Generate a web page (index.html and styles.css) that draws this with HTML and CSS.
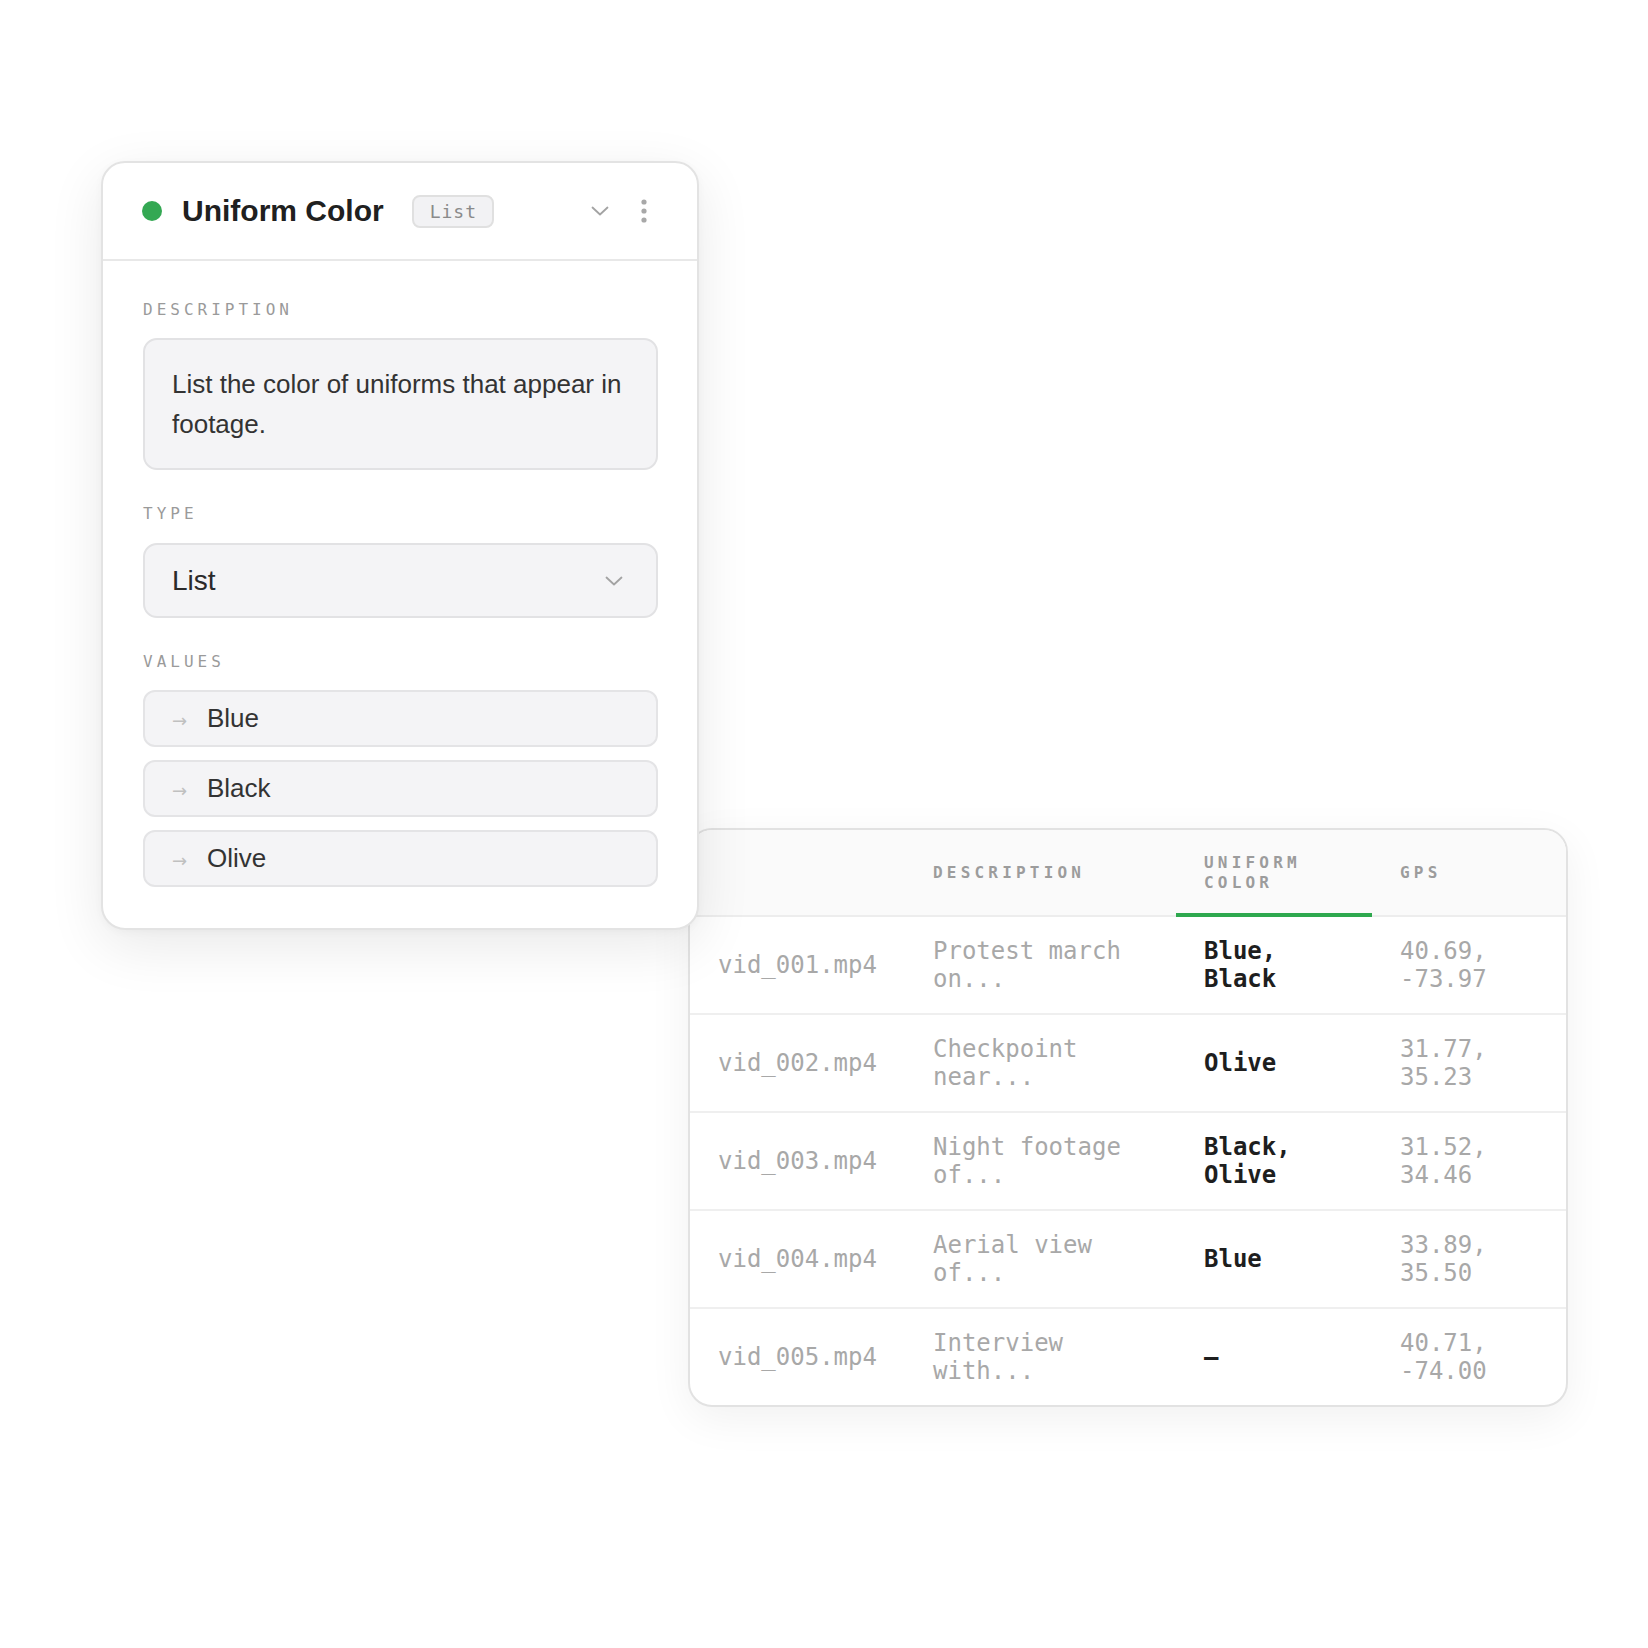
FILE: index.html
```html
<!DOCTYPE html>
<html lang="en">
<head>
<meta charset="utf-8">
<title>Uniform Color</title>
<link rel="stylesheet" href="styles.css">
</head>
<body>
<main class="stage">
  <section class="field-card">
    <header class="field-head">
      <span class="status-dot"></span>
      <h1 class="field-title">Uniform Color</h1>
      <span class="type-badge">List</span>
      <span class="head-actions">
        <svg class="icon-chevron" width="18" height="10" viewBox="0 0 18 10" aria-hidden="true"><path d="M1.5 1.5l7.5 7 7.5-7" fill="none" stroke="#a3a3a3" stroke-width="1.8" stroke-linecap="round" stroke-linejoin="round"/></svg>
        <svg class="icon-kebab" width="8" height="24" viewBox="0 0 8 24" aria-hidden="true"><circle cx="4" cy="3" r="2.6" fill="#a8a8a8"/><circle cx="4" cy="12" r="2.6" fill="#a8a8a8"/><circle cx="4" cy="21" r="2.6" fill="#a8a8a8"/></svg>
      </span>
    </header>
    <div class="field-body">
      <div class="field-label">DESCRIPTION</div>
      <div class="desc-box">List the color of uniforms that appear in footage.</div>

      <div class="field-label gap-top">TYPE</div>
      <div class="select-box">
        <span>List</span>
        <svg class="icon-chevron" width="18" height="10" viewBox="0 0 18 10" aria-hidden="true"><path d="M1.5 1.5l7.5 7 7.5-7" fill="none" stroke="#a3a3a3" stroke-width="1.8" stroke-linecap="round" stroke-linejoin="round"/></svg>
      </div>

      <div class="field-label gap-top">VALUES</div>
      <ul class="value-list">
        <li class="value-item"><span class="arrow">→</span><span>Blue</span></li>
        <li class="value-item"><span class="arrow">→</span><span>Black</span></li>
        <li class="value-item"><span class="arrow">→</span><span>Olive</span></li>
      </ul>
    </div>
  </section>

  <section class="table-card">
    <table class="data-table">
      <colgroup>
        <col class="c-file"><col class="c-desc"><col class="c-color"><col class="c-gps">
      </colgroup>
      <thead>
        <tr>
          <th></th>
          <th>DESCRIPTION</th>
          <th class="active">UNIFORM COLOR</th>
          <th>GPS</th>
        </tr>
      </thead>
      <tbody>
        <tr><td class="file">vid_001.mp4</td><td>Protest march on...</td><td class="val">Blue, Black</td><td>40.69, -73.97</td></tr>
        <tr><td class="file">vid_002.mp4</td><td>Checkpoint near...</td><td class="val">Olive</td><td>31.77, 35.23</td></tr>
        <tr><td class="file">vid_003.mp4</td><td>Night footage of...</td><td class="val">Black, Olive</td><td>31.52, 34.46</td></tr>
        <tr><td class="file">vid_004.mp4</td><td>Aerial view of...</td><td class="val">Blue</td><td>33.89, 35.50</td></tr>
        <tr><td class="file">vid_005.mp4</td><td>Interview with...</td><td class="val">—</td><td>40.71, -74.00</td></tr>
      </tbody>
    </table>
  </section>
</main>
</body>
</html>
```

FILE: styles.css
```css
* { box-sizing: border-box; }

html, body {
  margin: 0;
  padding: 0;
  background: #ffffff;
}

body {
  width: 1648px;
  height: 1648px;
  font-family: "Liberation Sans", Arial, sans-serif;
  color: #2b2b2b;
}

.stage {
  display: grid;
  padding: 161px 0 0 101px;
  grid-template-columns: 587px 11px 869px;
  grid-template-rows: 667px 102px auto;
}

/* ---------- Field card ---------- */
.field-card {
  grid-column: 1 / 3;
  grid-row: 1 / 3;
  position: relative;
  z-index: 2;
  width: 598px;
  height: 769px;
  background: #ffffff;
  border: 2px solid #e3e3e3;
  border-radius: 24px;
  box-shadow: 0 16px 56px rgba(0, 0, 0, 0.09), 0 2px 8px rgba(0, 0, 0, 0.03);
}

.field-head {
  display: flex;
  align-items: center;
  height: 98px;
  padding: 0 49px 0 39px;
  border-bottom: 2px solid #e8e8e8;
}

.status-dot {
  width: 20px;
  height: 20px;
  border-radius: 50%;
  background: #34a853;
  flex: none;
}

.field-title {
  margin: 0 0 0 20px;
  font-size: 30px;
  font-weight: 700;
  color: #202020;
  letter-spacing: 0;
}

.type-badge {
  margin-left: 28px;
  height: 33px;
  padding: 0 15px 0 16px;
  display: inline-flex;
  align-items: center;
  font-family: "DejaVu Sans Mono", monospace;
  font-size: 18px;
  letter-spacing: 1px;
  color: #8a8a8a;
  background: #f2f2f4;
  border: 2px solid #e0e0e0;
  border-radius: 8px;
}

.head-actions {
  margin-left: auto;
  display: flex;
  align-items: center;
  gap: 31px;
}

.icon-chevron { display: block; }
.icon-kebab { display: block; }

.field-body {
  padding: 40px 39px 40px 40px;
}

.field-label {
  font-family: "DejaVu Sans Mono", monospace;
  font-size: 16px;
  line-height: 18px;
  letter-spacing: 4px;
  color: #9a9a9a;
}

.field-label.gap-top { margin-top: 35px; }

.desc-box {
  margin-top: 19px;
  padding: 24px 26px 24px 27px;
  font-size: 26px;
  line-height: 40px;
  color: #333333;
  background: #f4f4f6;
  border: 2px solid #e2e2e4;
  border-radius: 14px;
}

.select-box {
  margin-top: 20px;
  height: 75px;
  display: flex;
  align-items: center;
  justify-content: space-between;
  padding: 0 33px 0 27px;
  font-size: 28px;
  color: #2a2a2a;
  background: #f4f4f6;
  border: 2px solid #e2e2e4;
  border-radius: 14px;
}

.value-list {
  list-style: none;
  margin: 19px 0 0;
  padding: 0;
  display: flex;
  flex-direction: column;
  gap: 13px;
}

.value-item {
  height: 57px;
  display: flex;
  align-items: center;
  padding-left: 27px;
  font-size: 26px;
  color: #333333;
  background: #f4f4f6;
  border: 2px solid #e4e4e6;
  border-radius: 12px;
}

.arrow {
  width: 35px;
  font-family: "DejaVu Sans", sans-serif;
  font-size: 18px;
  color: #c0c0c0;
  padding-top: 3px;
}

/* ---------- Table card ---------- */
.table-card {
  grid-column: 2 / 4;
  grid-row: 2 / 4;
  width: 880px;
  background: #ffffff;
  border: 2px solid #e2e2e2;
  border-radius: 24px;
  overflow: hidden;
  box-shadow: 0 12px 44px rgba(0, 0, 0, 0.06);
  position: relative;
  z-index: 1;
}

.data-table {
  width: 876px;
  table-layout: fixed;
  border-collapse: separate;
  border-spacing: 0;
  font-family: "DejaVu Sans Mono", monospace;
}

.c-file { width: 215px; }
.c-desc { width: 271px; }
.c-color { width: 196px; }
.c-gps { width: 194px; }

.data-table th {
  height: 87px;
  padding: 0 28px;
  text-align: left;
  vertical-align: middle;
  font-size: 16px;
  line-height: 20px;
  font-weight: 700;
  letter-spacing: 4.2px;
  color: #9c9c9c;
  background: #fafafa;
  border-bottom: 2px solid #ededed;
}

.data-table th.active {
  border-bottom-color: #2ea84e;
  box-shadow: inset 0 -2px 0 #2ea84e;
}

.data-table td {
  height: 98px;
  padding: 0 28px;
  vertical-align: middle;
  font-size: 24px;
  line-height: 28px;
  color: #a8a8a8;
  border-bottom: 2px solid #efefef;
}

.data-table tbody tr:last-child td {
  height: 96px;
  border-bottom: none;
}

.data-table td.file { white-space: nowrap; }

.data-table td.val {
  font-weight: 700;
  color: #1e1e1e;
}
```
